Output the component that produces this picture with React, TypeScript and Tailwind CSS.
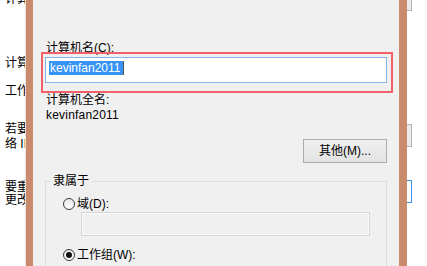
export default function App() {
  return (
    <div className="flex w-[427px] h-[266px] overflow-hidden bg-white text-[12px] text-[#000] font-['Liberation_Sans','Noto_Sans_CJK_SC',sans-serif]">
      {/* background window, left sliver */}
      <div className="w-[26px] shrink-0 overflow-hidden whitespace-nowrap pl-[5px] border-r border-[#e2e2e2] leading-[14px]">
        <div className="-mt-[8px]">计算机描述(D):</div>
        <div className="mt-[50px]">计算机全名:</div>
        <div className="mt-[14px]">工作组:</div>
        <div className="mt-[24px] leading-[15px]">
          <div>若要使用向导将计算机加入域或工作组，请单击“网</div>
          <div>络 ID”。</div>
        </div>
        <div className="mt-[29px] leading-[13px]">
          <div>要重命名这台计算机，或者更改其域或工作组，请单击</div>
          <div>更改”。</div>
        </div>
      </div>

      <div className="w-[7px] shrink-0 bg-[#C98B6C]" />

      {/* dialog */}
      <div className="w-[366px] shrink-0 bg-[#F0F0F0] flex flex-col overflow-hidden">
        <div className="mt-[41px] pl-[13px] leading-[14px]">计算机名(C):</div>
        <div className="-mt-[3px] ml-[8px] w-[352px] h-[41px] shrink-0 border-2 border-[#F2606A] pt-[3px] pl-[2px]">
          <div className="w-[342px] h-[26px] border border-[#82B6EA] bg-white pl-[3px] pt-[3px] flex items-start">
            <span className="bg-[#3594F5] text-white leading-[14px] pl-[1px] pr-[2px]">kevinfan2011</span>
            <span className="w-px h-[14px] bg-[#555]" />
          </div>
        </div>
        <div className="pl-[13px] leading-[14px]">计算机全名:</div>
        <div className="pl-[13px] leading-[16px] tracking-[0.2px]">kevinfan2011</div>
        <div className="self-end mr-[12px] mt-[16px] w-[84px] h-[24px] shrink-0 border border-[#ADADAD] bg-gradient-to-b from-[#F0F0F0] to-[#E3E3E3] flex items-center justify-center">
          其他(M)...
        </div>
        <fieldset className="ml-[12px] mt-[11px] w-[342px] h-[140px] shrink-0 border border-[#DCDCDC]">
          <legend className="ml-[4px] px-[3px] leading-[14px]">隶属于</legend>
          <div className="mt-[8px] pl-[17px] flex items-center gap-[2px] leading-[16px]">
            <span className="w-[12px] h-[12px] rounded-full border border-[#3a3a3a] bg-gradient-to-b from-[#E8E8E8] to-[#FFFFFF]" />
            <span>域(D):</span>
          </div>
          <div className="ml-[35px] w-[289px] h-[24px] border border-[#D6D6D6] shadow-[inset_0_0_0_1px_#FAFAFA] bg-[#F0F0F0]" />
          <div className="mt-[11px] pl-[17px] flex items-center gap-[2px] leading-[16px]">
            <span className="w-[12px] h-[12px] rounded-full border border-[#3a3a3a] bg-gradient-to-b from-[#E8E8E8] to-[#FFFFFF] flex items-center justify-center">
              <span className="w-[6px] h-[6px] rounded-full bg-[#111]" />
            </span>
            <span>工作组(W):</span>
          </div>
        </fieldset>
      </div>

      <div className="w-[8px] shrink-0 bg-[#C98B6C]" />

      {/* background window, right sliver */}
      <div className="w-[20px] shrink-0 flex flex-col">
        <div className="w-[5px] h-[11px] border-r border-b border-[#B5B5B5] bg-[#EAEAEA]" />
        <div className="mt-[113px] w-[5px] h-[23px] border-r border-y border-[#B5B5B5] bg-[#EAEAEA]" />
        <div className="mt-[33px] w-[5px] h-[23px] border-r border-y border-[#3C8FE8] bg-white" />
      </div>
    </div>
  );
}
